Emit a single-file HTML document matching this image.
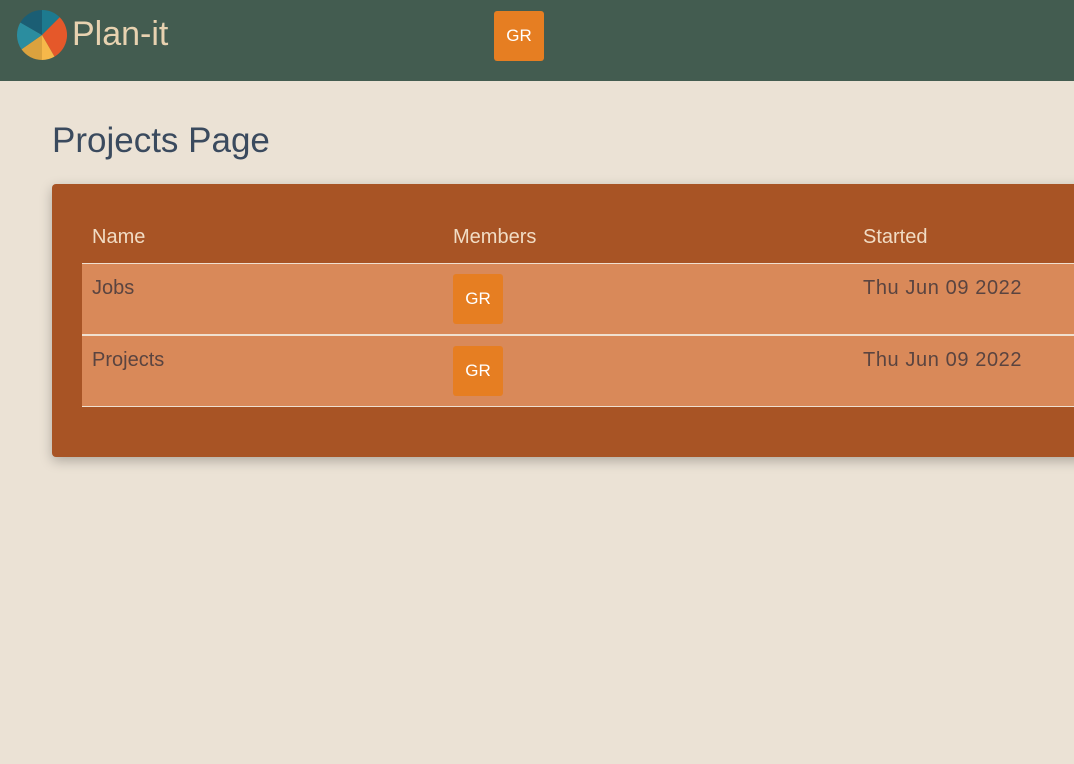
<!DOCTYPE html>
<html><head><style>
body{margin:0;width:1074px;height:764px;background:#ebe2d5;font-family:"Liberation Sans",sans-serif;overflow:hidden;position:relative}
.nav{position:absolute;left:0;top:0;width:1074px;height:81px;background:#435c50}
.logo{position:absolute;left:17px;top:10px}
.brand{position:absolute;left:72px;top:15px;font-size:34px;color:#e8d2b0;font-weight:300}
.av{position:absolute;width:50px;height:50px;background:#e67e22;border-radius:3px;color:#fff;font-size:17px;text-align:center;line-height:50px}
h1{position:absolute;left:52px;top:121px;margin:0;font-size:35px;font-weight:normal;color:#3a4a5e}
.card{position:absolute;left:52px;top:184px;width:1040px;height:273px;background:#a85425;border-radius:4px;box-shadow:0 4px 12px rgba(0,0,0,.25)}
.th{position:absolute;top:226px;font-size:20px;color:#f1dcc4}
.row{position:absolute;left:82px;width:1000px;height:70px;background:#d98959;border-top:1px solid #f0e0d0;border-bottom:1px solid #f0e0d0}
.td{position:absolute;font-size:20px;color:#5a4440}
</style></head><body>
<div class="nav">
<svg class="logo" width="50" height="50" viewBox="-25 -25 50 50">
<path d="M0 0 L0 -25 A25 25 0 0 1 17.7 -17.7Z" fill="#1d7a8f"/>
<path d="M0 0 L17.7 -17.7 A25 25 0 0 1 12.5 21.65Z" fill="#e5582a"/>
<path d="M0 0 L12.5 21.65 A25 25 0 0 1 0 25Z" fill="#f6b84a"/>
<path d="M0 0 L0 25 A25 25 0 0 1 -20.5 14.3Z" fill="#dba23e"/>
<path d="M0 0 L-20.5 14.3 A25 25 0 0 1 -21.65 -12.5Z" fill="#2b8d9f"/>
<path d="M0 0 L-21.65 -12.5 A25 25 0 0 1 0 -25Z" fill="#1b5e74"/>
</svg>
<div class="brand">Plan-it</div>
<div class="av" style="left:494px;top:11px">GR</div>
</div>
<h1>Projects Page</h1>
<div class="card"></div>
<div class="th" style="left:92px">Name</div>
<div class="th" style="left:453px">Members</div>
<div class="th" style="left:863px">Started</div>
<div class="row" style="top:263px"></div>
<div class="row" style="top:335px"></div>
<div class="td" style="left:92px;top:277px">Jobs</div>
<div class="av" style="left:453px;top:274px">GR</div>
<div class="td" style="left:863px;top:277px;letter-spacing:0.6px">Thu Jun 09 2022</div>
<div class="td" style="left:92px;top:349px">Projects</div>
<div class="av" style="left:453px;top:346px">GR</div>
<div class="td" style="left:863px;top:349px;letter-spacing:0.6px">Thu Jun 09 2022</div>
</body></html>
